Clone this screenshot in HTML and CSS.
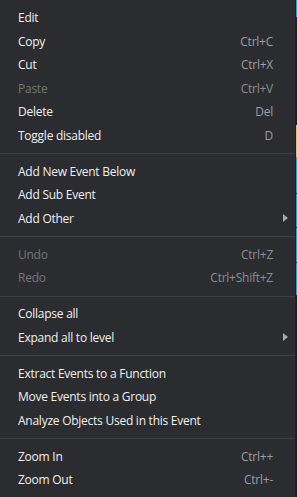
FILE: index.html
```html
<!DOCTYPE html>
<html lang="en">
<head>
  <meta charset="UTF-8" />
  <title>Event context menu</title>
  <link rel="stylesheet" href="styles.css">
</head>
<body>

<div class="menu">
  <div class="item"><span>Edit</span></div>
  <div class="item"><span>Copy</span><span class="key">Ctrl+C</span></div>
  <div class="item"><span>Cut</span><span class="key">Ctrl+X</span></div>
  <div class="item disabled"><span>Paste</span><span class="key">Ctrl+V</span></div>
  <div class="item"><span>Delete</span><span class="key">Del</span></div>
  <div class="item"><span>Toggle disabled</span><span class="key">D</span></div>
  <div class="sep"></div>
  <div class="item"><span>Add New Event Below</span></div>
  <div class="item"><span>Add Sub Event</span></div>
  <div class="item sub"><span>Add Other</span><span class="arrow"></span></div>
  <div class="sep"></div>
  <div class="item disabled"><span>Undo</span><span class="key">Ctrl+Z</span></div>
  <div class="item disabled"><span>Redo</span><span class="key">Ctrl+Shift+Z</span></div>
  <div class="sep"></div>
  <div class="item"><span>Collapse all</span></div>
  <div class="item sub"><span>Expand all to level</span><span class="arrow"></span></div>
  <div class="sep"></div>
  <div class="item"><span>Extract Events to a Function</span></div>
  <div class="item"><span>Move Events into a Group</span></div>
  <div class="item"><span>Analyze Objects Used in this Event</span></div>
  <div class="sep"></div>
  <div class="item"><span>Zoom In</span><span class="key">Ctrl++</span></div>
  <div class="item"><span>Zoom Out</span><span class="key">Ctrl+-</span></div>
</div>

<div class="edge">
  <div class="strip">
    <div class="blue" style="height: 17px"></div>
    <div class="gap" style="height: 108px"></div>
    <div class="yellow" style="height: 32px"></div>
    <div class="blue" style="height: 36px"></div>
    <div class="gap" style="height: 1px"></div>
    <div class="blue" style="height: 33px"></div>
    <div class="gap" style="height: 1px"></div>
    <div class="blue" style="height: 34px"></div>
    <div class="gap" style="height: 1px"></div>
    <div class="blue" style="height: 32px"></div>
  </div>
</div>

</body>
</html>
```

FILE: styles.css
```css
body {
  margin: 0;
  background-color: #1f2023;
  font-family: 'Open Sans', 'Noto Sans', sans-serif;
  font-size: 12px;
  letter-spacing: -0.25px;
  display: flex;
  height: 497px;
  overflow: hidden;
}

.menu {
  width: 295px;
  flex-shrink: 0;
  background-color: #2a2c30;
  padding-top: 6px;
  box-sizing: border-box;
}

.item {
  height: 23.5px;
  display: flex;
  align-items: center;
  justify-content: space-between;
  padding: 0 22px 0 18px;
  color: #f0f0f0;
}

.item.disabled {
  color: #767676;
}

.key {
  color: #9a9fa5;
}

.item.disabled .key {
  color: #8a8e93;
}

.item.sub {
  padding-right: 7px;
}

.arrow {
  width: 0;
  height: 0;
  border-top: 4px solid transparent;
  border-bottom: 4px solid transparent;
  border-left: 5px solid #a8a8a8;
}

.sep {
  height: 1px;
  background-color: #3d3f43;
  margin: 6px 0 5.5px 0;
}

.edge {
  width: 2px;
  display: flex;
  justify-content: flex-end;
}

.strip {
  width: 1px;
  display: flex;
  flex-direction: column;
}

.blue {
  background-color: #2f9fd4;
}

.yellow {
  background-color: #e4c261;
}

.gap {
  background-color: #1f2023;
}
```
